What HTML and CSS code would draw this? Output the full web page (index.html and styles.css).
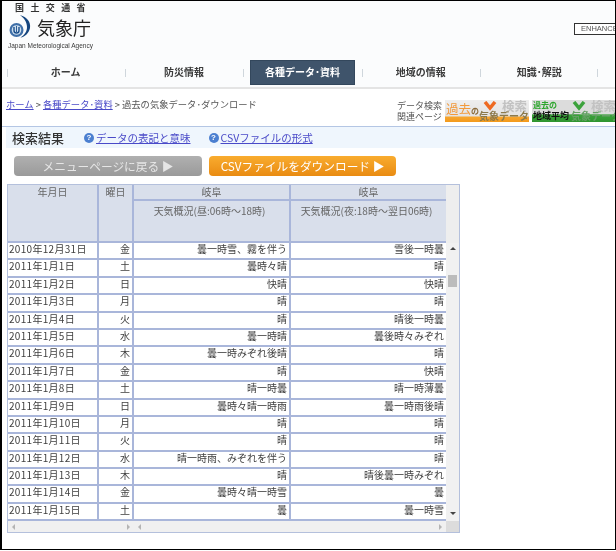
FILE: index.html
```html
<!DOCTYPE html>
<html lang="ja">
<head>
<meta charset="utf-8">
<title>過去の気象データ・ダウンロード</title>
<link rel="stylesheet" href="styles.css">
</head>
<body>
<div class="shot">
  <header class="head">
    <div class="brand">
      <div class="ministry">国土交通省</div>
      <div class="logo-row">
        <svg class="logo" width="26" height="26" viewBox="0 0 26 26">
          <circle cx="8.500" cy="16" r="7" fill="#3f6fa8"/>
          <circle cx="8.500" cy="16" r="4.800" fill="#cfe0ef"/>
          <path d="M6 13v3.500a2.500 2.500 0 0 0 5 0V13" fill="none" stroke="#1c4f8c" stroke-width="1.400"/>
          <path d="M8.500 12v6" stroke="#1c4f8c" stroke-width="0.900"/>
          <path d="M12 1c7 2 11 7 10 13-1 5-5 9-9.500 9.500 4-2.500 6.500-6 6.500-10.500 0-5-3-9-7-12z" fill="#16467f"/>
        </svg>
        <span class="agency">気象庁</span>
      </div>
      <div class="english">Japan Meteorological Agency</div>
    </div>
    <div class="enhance">ENHANCE</div>
  </header>

  <nav class="nav">
    <a class="nav-item">ホーム</a>
    <a class="nav-item">防災情報</a>
    <a class="nav-item"><span class="active-box">各種データ･資料</span></a>
    <a class="nav-item">地域の情報</a>
    <a class="nav-item">知識･解説</a>
  </nav>

  <div class="crumb-row">
    <div class="crumbs"><a>ホーム</a> &gt; <a>各種データ･資料</a> &gt; 過去の気象データ･ダウンロード</div>
    <div class="related">
      <div class="related-label">データ検索<br>関連ページ</div>
      <div class="banner banner-orange">
        <span class="b-title">過去<small>の</small></span>
        <svg class="b-mark" width="14" height="10" viewBox="0 0 14 10"><path d="M2 1l5 6 5-6" fill="none" stroke="#ee6a22" stroke-width="3.500"/></svg>
        <span class="b-search">検索</span>
        <span class="b-data">気象データ</span>
      </div>
      <div class="banner banner-green">
        <span class="b-title">過去の</span>
        <span class="b-region">地域平均</span>
        <svg class="b-mark" width="14" height="10" viewBox="0 0 14 10"><path d="M2 1l5 6 5-6" fill="none" stroke="#3ca23c" stroke-width="3.500"/></svg>
        <span class="b-search">検索</span>
        <span class="b-data">気象データ</span>
      </div>
    </div>
  </div>

  <div class="result-bar">
    <h1 class="result-title">検索結果</h1>
    <span class="help"><i class="q">?</i><a>データの表記と意味</a></span>
    <span class="help"><i class="q">?</i><a>CSVファイルの形式</a></span>
  </div>

  <div class="buttons">
    <div class="btn btn-grey">メニューページに戻る ▶</div>
    <div class="btn btn-orange">CSVファイルをダウンロード ▶</div>
  </div>

  <div class="frame">
    <div class="table-wrap">
      <div class="thead">
        <div class="th date">年月日</div>
        <div class="th dow">曜日</div>
        <div class="th place a">岐阜</div>
        <div class="th place b">岐阜</div>
        <div class="th sub a">天気概況(昼:06時～18時)</div>
        <div class="th sub b">天気概況(夜:18時～翌日06時)</div>
      </div>
      <div class="tbody">
        <div class="row"><div class="d">2010年12月31日</div><div class="w">金</div><div class="t">曇一時雪、霧を伴う</div><div class="t">雪後一時曇</div></div>
        <div class="row"><div class="d">2011年1月1日</div><div class="w">土</div><div class="t">曇時々晴</div><div class="t">晴</div></div>
        <div class="row"><div class="d">2011年1月2日</div><div class="w">日</div><div class="t">快晴</div><div class="t">快晴</div></div>
        <div class="row"><div class="d">2011年1月3日</div><div class="w">月</div><div class="t">晴</div><div class="t">晴</div></div>
        <div class="row"><div class="d">2011年1月4日</div><div class="w">火</div><div class="t">晴</div><div class="t">晴後一時曇</div></div>
        <div class="row"><div class="d">2011年1月5日</div><div class="w">水</div><div class="t">曇一時晴</div><div class="t">曇後時々みぞれ</div></div>
        <div class="row"><div class="d">2011年1月6日</div><div class="w">木</div><div class="t">曇一時みぞれ後晴</div><div class="t">晴</div></div>
        <div class="row"><div class="d">2011年1月7日</div><div class="w">金</div><div class="t">晴</div><div class="t">快晴</div></div>
        <div class="row"><div class="d">2011年1月8日</div><div class="w">土</div><div class="t">晴一時曇</div><div class="t">晴一時薄曇</div></div>
        <div class="row"><div class="d">2011年1月9日</div><div class="w">日</div><div class="t">曇時々晴一時雨</div><div class="t">曇一時雨後晴</div></div>
        <div class="row"><div class="d">2011年1月10日</div><div class="w">月</div><div class="t">晴</div><div class="t">晴</div></div>
        <div class="row"><div class="d">2011年1月11日</div><div class="w">火</div><div class="t">晴</div><div class="t">晴</div></div>
        <div class="row"><div class="d">2011年1月12日</div><div class="w">水</div><div class="t">晴一時雨、みぞれを伴う</div><div class="t">晴</div></div>
        <div class="row"><div class="d">2011年1月13日</div><div class="w">木</div><div class="t">晴</div><div class="t">晴後曇一時みぞれ</div></div>
        <div class="row"><div class="d">2011年1月14日</div><div class="w">金</div><div class="t">曇時々晴一時雪</div><div class="t">曇</div></div>
        <div class="row"><div class="d">2011年1月15日</div><div class="w">土</div><div class="t">曇</div><div class="t">曇一時雪</div></div>
      </div>
    </div>
    <div class="vscroll">
      <div class="v-head"></div>
      <div class="v-track">
        <span class="arrow-up"></span>
        <span class="thumb"></span>
        <span class="arrow-down"></span>
      </div>
    </div>
    <div class="hscroll">
      <div class="h-left"><span class="arrow-l"></span><span class="arrow-r"></span></div>
      <div class="h-right"><span class="arrow-l"></span><span class="arrow-r"></span></div>
      <div class="h-corner"></div>
    </div>
  </div>
</div>
</body>
</html>
```
FILE: styles.css
```css
* { box-sizing: border-box; }
html, body { margin: 0; padding: 0; background: #fff; }
body {
  width: 616px;
  height: 551px;
  overflow: hidden;
  font-family: "Noto Sans CJK JP", "Liberation Sans", sans-serif;
  font-size: 10px;
  color: #3a3a3a;
}
a { color: #4a4ac8; text-decoration: underline; }

.shot {
  width: 616px;
  height: 550px;
  border: solid #000;
  border-width: 1px 1px 1px 2px;
  overflow: hidden;
  filter: blur(0.3px);
}

.head {
  height: 54px;
  display: flex;
  justify-content: space-between;
  align-items: flex-end;
  background: #fbfcfd;
}
.brand { padding-left: 6px; width: 110px; height: 54px; display: flex; flex-direction: column; }
.ministry {
  font-size: 9px;
  line-height: 11px;
  margin: 1px 0 0 7px;
  letter-spacing: 6.400px;
  font-weight: 700;
  color: #333;
  white-space: nowrap;
}
.logo-row { display: flex; align-items: center; height: 26px; margin-top: 1px; }
.logo { flex: none; }
.agency { font-size: 18px; line-height: 26px; color: #222; margin-left: 3px; white-space: nowrap; }
.english { font-size: 6.500px; line-height: 8px; margin-top: 2px; white-space: nowrap; font-family: "Liberation Sans", sans-serif; }
.enhance {
  width: 41px;
  height: 12px;
  margin-bottom: 20px;
  border: 1px solid #333;
  border-right: 0;
  font-family: "Liberation Sans", sans-serif;
  font-size: 7.500px;
  line-height: 10px;
  padding-left: 6px;
  color: #555;
  background: #fff;
  overflow: hidden;
  white-space: nowrap;
}

.nav {
  display: grid;
  grid-template-columns: repeat(5, 118.400px);
  height: 34px;
  padding: 5px 0 0 4.500px;
  background: #fbfcfd;
  border-bottom: 2px solid #e4e4e4;
}
.nav-item {
  height: 25px;
  display: flex;
  align-items: center;
  justify-content: center;
  padding-bottom: 2px;
  font-size: 10px;
  font-weight: 700;
  color: #3b3b3b;
  text-decoration: none;
  background: linear-gradient(#cfd6dc, #cfd6dc) left center / 1px 8px no-repeat;
}
.nav-item:last-child {
  background:
    linear-gradient(#cfd6dc, #cfd6dc) left center / 1px 8px no-repeat,
    linear-gradient(#cfd6dc, #cfd6dc) right center / 1px 8px no-repeat;
}
.active-box {
  width: 105px;
  height: 25px;
  margin-bottom: -2px;
  padding-bottom: 2px;
  display: flex;
  align-items: center;
  justify-content: center;
  background: #3f546b;
  color: #fff;
  border: 1px solid #33475c;
}

.crumb-row {
  height: 38px;
  padding: 0 0 0 4px;
  display: flex;
  justify-content: space-between;
  border-bottom: 1px solid #b4c6e4;
}
.crumbs { padding-top: 8px; line-height: 15px; color: #555; white-space: nowrap; font-size: 9.300px; }
.related { display: flex; padding-top: 11px; width: 219px; flex: none; gap: 3px; overflow: hidden; }
.related-label { width: 46px; flex: none; font-size: 9px; line-height: 11px; color: #555; white-space: nowrap; padding-left: 1px; }
.banner {
  position: relative;
  width: 84px;
  height: 22px;
  flex: none;
  background: linear-gradient(#eeeeee 0, #e4e4e4 72%, #f6a52e 78%, #f39a1c 100%);
  overflow: hidden;
  white-space: nowrap;
}
.banner-green { background: linear-gradient(#dcdcdc 0, #dcdcdc 62%, #3ca23c 68%, #2f952f 100%); }
.banner > span, .banner > svg { position: absolute; line-height: 1; }
.b-title { left: 1px; top: 3px; font-size: 12.500px; color: #f2993a; }
.b-title small { font-size: 8px; color: #8a6a3a; font-weight: 700; }
.banner-green .b-title { font-size: 8px; color: #2ea62e; font-weight: 700; left: 1px; top: 1px; }
.b-region { left: 1px; top: 11px; font-size: 9px; font-weight: 700; color: #111; }
.b-mark { left: 38px; top: 1px; }
.banner-green .b-mark { left: 40px; }
.b-search { left: 57px; top: 0; font-size: 12.500px; font-weight: 700; color: #c2c2c2; }
.banner-green .b-search { left: 59px; }
.b-data { left: 34px; top: 11px; font-size: 10px; font-weight: 700; color: #8c7a4c; }
.banner-green .b-data { left: 39px; color: #66a066; }

.result-bar {
  height: 21px;
  background: #eff6fd;
  padding-left: 6px;
  display: flex;
  align-items: center;
  margin-left: 4px;
  font-size: 10.500px;
}
.result-title { margin: 0 17px 0 0; font-size: 13px; font-weight: 500; color: #333; line-height: 21px; width: 55px; white-space: nowrap; }
.help { display: inline-flex; align-items: center; margin-right: 18px; white-space: nowrap; }
.q {
  width: 10px;
  height: 10px;
  border-radius: 50%;
  background: #4b7fd0;
  color: #fff;
  font: 700 8px/10px "Liberation Sans", sans-serif;
  text-align: center;
  margin-right: 2px;
}

.buttons { display: flex; gap: 7px; padding: 8px 0 0 12px; height: 36px; }
.btn {
  height: 20px;
  border-radius: 4px;
  font-size: 11.700px;
  line-height: 20px;
  text-align: center;
  color: #fff;
  white-space: nowrap;
}
.btn-grey { width: 188px; color: #e6e6e6; background: linear-gradient(#b0b0b0, #9a9a9a); }
.btn-orange { width: 187px; background: linear-gradient(#f9ac2f, #e98b12); }

.frame {
  margin-left: 5px;
  width: 453px;
  height: 349px;
  border: 1px solid #b4c0dc;
  display: grid;
  grid-template-columns: 438px 13px;
  grid-template-rows: 336px 11px;
  background: #fff;
}
.table-wrap { display: flex; flex-direction: column; overflow: hidden; }

.thead {
  display: grid;
  grid-template-columns: 91px 35px 157px 155px;
  grid-template-rows: 16px 42px;
  background: #d9dfeb;
  height: 58px;
  flex: none;
  color: #666;
  text-align: center;
  border-bottom: 2px solid #a9b6da;
}
.th { line-height: 14px; white-space: nowrap; border-right: 2px solid #a9b6da; }
.th.date { grid-row: 1 / 3; }
.th.dow { grid-row: 1 / 3; }
.th.place { border-bottom: 2px solid #a9b6da; }
.th.sub { padding-top: 3px; padding-right: 4px; }
.th.b { border-right: 0; }

.tbody { display: grid; grid-auto-rows: 17.400px; }
.row {
  display: grid;
  grid-template-columns: 91px 35px 157px 155px;
  border-bottom: 2px solid #a9b6da;
  line-height: 12px;
  color: #404040;
}
.row > div { white-space: nowrap; border-right: 2px solid #a9b6da; }
.row > div:last-child { border-right: 0; }
.d { padding-left: 1px; letter-spacing: 0.300px; }
.w { text-align: right; padding-right: 2px; }
.t { text-align: right; padding-right: 2px; }

.vscroll { display: flex; flex-direction: column; background: #f0f0f0; }
.v-head { height: 58px; flex: none; background: #eeeeee; }
.v-track { flex: 1; position: relative; background: #f1f1f1; }
.thumb { position: absolute; left: 2px; top: 32px; width: 9px; height: 12px; background: #bcbcbc; }
.arrow-up, .arrow-down { position: absolute; left: 4px; width: 0; height: 0; border: 3px solid transparent; }
.arrow-up { top: 1px; border-bottom: 3px solid #444; }
.arrow-down { bottom: 3px; border-top: 3px solid #444; }

.hscroll {
  grid-column: 1 / 3;
  display: grid;
  grid-template-columns: 126px 312px 13px;
  background: #f0f0f0;
}
.h-left, .h-right { display: flex; align-items: center; justify-content: space-between; padding: 0 4px; }
.h-corner { background: #dcdcdc; }
.arrow-l, .arrow-r { width: 0; height: 0; border: 3px solid transparent; }
.arrow-l { border-left-width: 0; border-right-color: #b4b4b4; }
.arrow-r { border-right-width: 0; border-left-color: #b4b4b4; }
```
